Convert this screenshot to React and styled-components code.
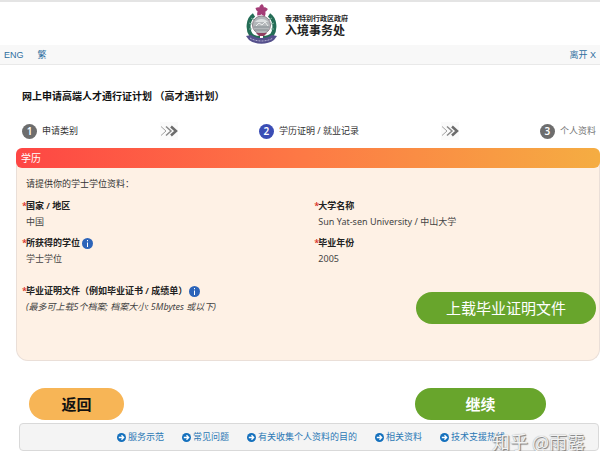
import React from 'react';
import styled, { createGlobalStyle } from 'styled-components';

const GlobalStyle = createGlobalStyle`
    * {
        box-sizing: border-box;
    }
    body {
        margin: 0;
        background-color: #fff;
        color: #333;
        font-family: "Noto Sans", "Noto Sans CJK SC", sans-serif;
        font-size: 9px;
        line-height: 16px;
    }
    h1, h2, p, ul, dl, dd {
        margin: 0;
        padding: 0;
    }
`;

const Page = styled.div`
    position: relative;
    border-top: 2px solid #e4e4e4;
`;

const Header = styled.header`
    display: flex;
    justify-content: center;
    align-items: center;
    gap: 8px;
    height: 43px;
    padding-right: 6px;
`;

const Department = styled.div`
    padding-top: 3px;
    color: #222;
    font-family: "Noto Sans CJK SC", sans-serif;
    font-weight: 700;
`;

const Government = styled.div`
    font-size: 7px;
    line-height: 9px;
`;

const Office = styled.div`
    font-size: 12px;
    line-height: 14px;
`;

const TopBar = styled.nav`
    display: flex;
    align-items: center;
    gap: 14px;
    height: 20px;
    padding: 0 4px;
    background-color: #f8f8f8;
    border-bottom: 1px solid #e9e9e9;
    font-family: "Liberation Sans", "Noto Sans CJK SC", sans-serif;
`;

const TopLink = styled.a`
    color: #2f6f9f;
    text-decoration: none;
    margin-left: ${(props) => (props.$end ? 'auto' : '0')};
`;

const Title = styled.h1`
    padding: 23px 22px 0;
    color: #111;
    font-size: 10px;
    font-weight: 700;
    line-height: 16px;
`;

const Steps = styled.div`
    display: flex;
    justify-content: space-between;
    align-items: center;
    padding: 18px 4px 8px 22px;
`;

const Step = styled.div`
    display: flex;
    align-items: center;
    gap: 5px;
    color: ${(props) => (props.$later ? '#777' : '#333')};
`;

const StepNumber = styled.span`
    width: 15px;
    height: 15px;
    border-radius: 50%;
    background-color: ${(props) => (props.$active ? '#3a4db5' : '#6d6d6d')};
    color: #fff;
    font-size: 10px;
    font-weight: 600;
    line-height: 15px;
    text-align: center;
`;

const Panel = styled.section`
    margin-left: 16px;
    padding-bottom: 36px;
    border: 1px solid #eadfd8;
    border-top: 0;
    border-radius: 8px 8px 12px 12px;
    background-color: #fef1e5;
`;

const PanelTitle = styled.h2`
    margin: 0 -1px;
    padding: 0 5px;
    border-radius: 6px;
    background: linear-gradient(90deg, #fe4644, #fd7a45 50%, #f5ad42);
    color: #fff;
    font-size: 10px;
    font-weight: 400;
    line-height: 20px;
`;

const Intro = styled.p`
    padding: 8px 9px 6px;
`;

const Fields = styled.dl`
    display: grid;
    grid-template-columns: 38fr 37fr;
    row-gap: 5px;
    padding-left: 5px;
`;

const Label = styled.dt`
    display: flex;
    align-items: center;
    color: #222;
    font-weight: 600;

    &::before {
        content: '*';
        width: 4px;
        color: #d9342b;
    }
`;

const Value = styled.dd`
    padding-left: 4px;
    color: #444;
`;

const Upload = styled.div`
    display: flex;
    justify-content: space-between;
    align-items: flex-end;
    padding: 16px 3px 0 5px;
`;

const UploadInfo = styled.dl`
    padding-bottom: 9px;
`;

const Note = styled(Value)`
    font-style: italic;
`;

const InfoButton = styled.button`
    display: flex;
    margin-left: 2px;
    padding: 0;
    border: 0;
    background: none;
`;

const Pill = styled.button`
    min-width: ${(props) => props.$width}px;
    height: 32px;
    padding: 0;
    border: 0;
    border-radius: 16px;
    background-color: ${(props) => (props.$back ? '#f7b556' : '#68a52c')};
    color: ${(props) => (props.$back ? '#111' : '#fff')};
    font-family: inherit;
    font-size: 15px;
    font-weight: ${(props) => (props.$bold ? 700 : 400)};
    line-height: 20px;
`;

const Actions = styled.div`
    display: flex;
    justify-content: space-between;
    padding: 27px 54px 3px 29px;
`;

const Footer = styled.footer`
    margin: 0 1px 0 19px;
    border: 1px solid #d9d9d9;
    border-radius: 4px;
    background-color: #f4f4f4;
`;

const FooterLinks = styled.ul`
    display: flex;
    justify-content: center;
    gap: 18px;
    padding: 5px 0 5px 4px;
    list-style: none;
`;

const FooterLink = styled.a`
    display: flex;
    align-items: center;
    gap: 2px;
    color: #2b78b4;
    text-decoration: none;
`;

const Watermark = styled.div`
    position: absolute;
    right: 15px;
    bottom: -2px;
    color: #f2f2f2;
    font-family: "Noto Sans CJK SC", sans-serif;
    font-size: 18px;
    line-height: 24px;
    text-shadow: 1px 1px 1px #777, 0 0 1px #999;
    pointer-events: none;
`;

const Emblem = () => (
    <svg width="31" height="40" viewBox="0 0 31 40" aria-hidden="true">
        <g fill="#a43d77">
            {[0, 72, 144, 216, 288].map((turn) => (
                <path key={turn} transform={`rotate(${turn} 15.500 6.500)`} d="M15.500 7C12 4 13 2 16 0C19 3 18 5 15.500 7Z" />
            ))}
        </g>
        <path d="M8 11C2 15 1 25 5 31C7 33 10 34 14 34" fill="none" stroke="#246d56" strokeWidth="4" />
        <path d="M23 11C29 15 30 25 26 31C24 33 21 34 17 34" fill="none" stroke="#246d56" strokeWidth="4" />
        <path d="M5 14L8 16M3 19L6 20M3 25L6 25M26 14L23 16M28 19L25 20M28 25L25 25" stroke="#7fae9b" />
        <circle cx="15.500" cy="21" r="9" fill="#b3b7ba" stroke="#8c7f89" />
        <path d="M9 18C12 14 19 14 22 18Z" fill="#dde0e1" />
        <path d="M8 23H23M9 26H22" stroke="#858e93" />
        <path d="M10 22L13 19L16 21L19 18L22 22" fill="none" stroke="#eceeee" />
        <path d="M10 29H21L18 32H13Z" fill="#913e60" />
        <path d="M0 32L5 31C10 35 21 35 26 31L31 32L28 36C21 41 10 41 3 36Z" fill="#55508c" />
        <path d="M4 34C10 38 21 38 27 34" fill="none" stroke="#b5b0d0" strokeDasharray="2 1" />
    </svg>
);

const Chevrons = () => (
    <svg width="18" height="18" viewBox="0 0 18 18" fill="none" aria-hidden="true">
        <path fill="#fafafa" d="M0 0H18V18H0Z" />
        <path stroke="#a0a0a0" d="M1 4.500L6 9L1 13.500" />
        <path stroke="#888" strokeWidth="1.500" d="M6 4.500L11 9L6 13.500" />
        <path stroke="#6b6b6b" strokeWidth="2.500" d="M11 4.500L16 9L11 13.500" />
    </svg>
);

const Info = () => (
    <InfoButton type="button" aria-label="说明">
        <svg width="11" height="11" viewBox="0 0 11 11">
            <circle cx="5.500" cy="5.500" r="5.500" fill="#2c64b9" />
            <path d="M5 2H6V3.200H5ZM5 4.500H6V9H5Z" fill="#fff" />
        </svg>
    </InfoButton>
);

const ArrowIcon = () => (
    <svg width="9" height="9" viewBox="0 0 9 9" aria-hidden="true">
        <circle cx="4.500" cy="4.500" r="4.500" fill="#1470bd" />
        <path d="M1.800 4.500H6.500M4.500 2.300L6.700 4.500L4.500 6.700" fill="none" stroke="#fff" strokeWidth="1.300" />
    </svg>
);

const links = ['服务示范', '常见问题', '有关收集个人资料的目的', '相关资料', '技术支援热线'];

const App = () => {
    return <Page>
        <GlobalStyle />
        <Header>
            <Emblem />
            <Department>
                <Government>香港特别行政区政府</Government>
                <Office>入境事务处</Office>
            </Department>
        </Header>
        <TopBar>
            <TopLink href="#eng">ENG</TopLink>
            <TopLink href="#zh">繁</TopLink>
            <TopLink href="#exit" $end>离开 X</TopLink>
        </TopBar>
        <main>
            <Title>网上申请高端人才通行证计划 （高才通计划）</Title>
            <Steps>
                <Step><StepNumber>1</StepNumber>申请类别</Step>
                <Chevrons />
                <Step><StepNumber $active>2</StepNumber>学历证明 / 就业记录</Step>
                <Chevrons />
                <Step $later><StepNumber>3</StepNumber>个人资料</Step>
            </Steps>
            <Panel>
                <PanelTitle>学历</PanelTitle>
                <Intro>请提供你的学士学位资料：</Intro>
                <Fields>
                    <div>
                        <Label>国家 / 地区</Label>
                        <Value>中国</Value>
                    </div>
                    <div>
                        <Label>大学名称</Label>
                        <Value>Sun Yat-sen University / 中山大学</Value>
                    </div>
                    <div>
                        <Label>所获得的学位<Info /></Label>
                        <Value>学士学位</Value>
                    </div>
                    <div>
                        <Label>毕业年份</Label>
                        <Value>2005</Value>
                    </div>
                </Fields>
                <Upload>
                    <UploadInfo>
                        <Label>毕业证明文件（例如毕业证书 / 成绩单）<Info /></Label>
                        <Note>(最多可上载5个档案; 档案大小: 5Mbytes 或以下)</Note>
                    </UploadInfo>
                    <Pill type="button" $width={180}>上载毕业证明文件</Pill>
                </Upload>
            </Panel>
            <Actions>
                <Pill type="button" $width={95} $back $bold>返回</Pill>
                <Pill type="button" $width={131} $bold>继续</Pill>
            </Actions>
        </main>
        <Footer>
            <FooterLinks>
                {links.map((link) => (
                    <li key={link}>
                        <FooterLink href="#help"><ArrowIcon />{link}</FooterLink>
                    </li>
                ))}
            </FooterLinks>
        </Footer>
        <Watermark>知乎 @雨露</Watermark>
    </Page>
};

export default App;
